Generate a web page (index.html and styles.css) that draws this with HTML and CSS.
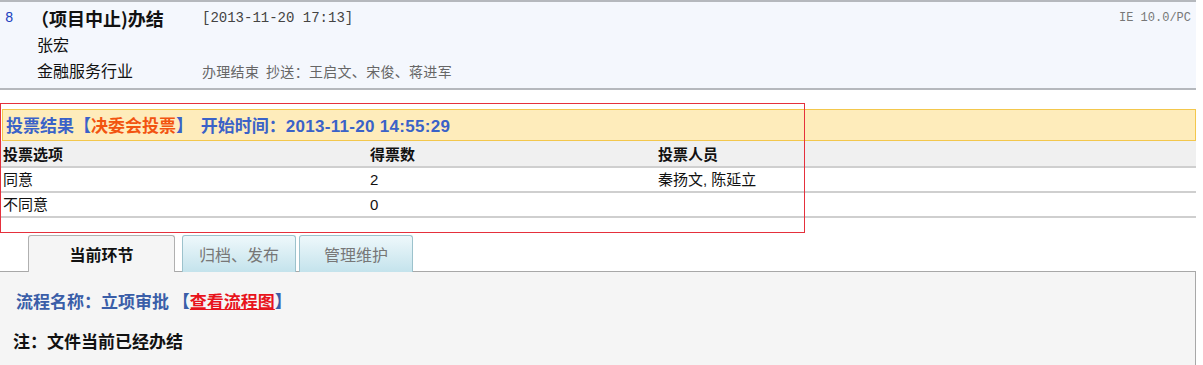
FILE: index.html
```html
<!DOCTYPE html>
<html lang="zh-CN">
<head>
    <meta charset="UTF-8">
    <title>办结详情</title>
    <link rel="stylesheet" href="styles.css">
</head>
<body>

    <!-- Document header -->
    <div class="doc-head">
        <div class="doc-num">8</div>
        <div class="doc-title">
            <div class="title">（项目中止)办结</div>
            <div>张宏</div>
            <div>金融服务行业</div>
        </div>
        <div class="doc-meta">
            <div class="date">[2013-11-20 17:13]</div>
            <div>&nbsp;</div>
            <div class="note">办理结束 &nbsp;抄送：王启文、宋俊、蒋进军</div>
        </div>
        <div class="doc-client">IE 10.0/PC</div>
    </div>

    <!-- Vote result -->
    <div class="vote">
        <div class="vote-bar">
            投票结果<span class="vote-type">【<em>决委会投票</em>】</span>&nbsp;&nbsp;开始时间：<span class="vote-time">2013-11-20 14:55:29</span>
        </div>
        <table class="vote-table">
            <tr>
                <th class="col-opt">投票选项</th>
                <th class="col-num">得票数</th>
                <th>投票人员</th>
            </tr>
            <tr>
                <td>同意</td>
                <td>2</td>
                <td>秦扬文, 陈延立</td>
            </tr>
            <tr>
                <td>不同意</td>
                <td>0</td>
                <td></td>
            </tr>
        </table>
        <div class="mark"></div>
    </div>

    <!-- Tabs -->
    <div class="tabs">
        <a class="tab active" href="#">当前环节</a>
        <a class="tab" href="#">归档、发布</a>
        <a class="tab" href="#">管理维护</a>
    </div>
    <div class="panel">
        <p class="flow">流程名称：立项审批 <span class="bracket">【<a href="#">查看流程图</a>】</span></p>
        <p class="remark">注：文件当前已经办结</p>
    </div>

</body>
</html>
```

FILE: styles.css
```css
/* General */
body {
    margin: 0;
    font-family: "Noto Sans CJK SC", "Noto Sans", sans-serif;
    font-size: 15px;
    color: #111;
    background: #fff;
    width: 1196px;
}

/* Document header */
.doc-head {
    display: flex;
    border-top: 2px solid #b5b8bd;
    border-bottom: 2px solid #b5b8bd;
    background: #f4f7fd;
    padding: 3px 0 3px;
    height: 80px;
    line-height: 26px;
}

.doc-num {
    width: 35px;
    padding-left: 5px;
    box-sizing: border-box;
    font-family: "Liberation Mono", monospace;
    font-size: 14px;
    color: #2040c0;
}

.doc-title {
    width: 167px;
    padding-left: 2px;
    box-sizing: border-box;
    font-size: 16px;
}

.doc-title .title {
    font-weight: bold;
    font-size: 18px;
    margin-left: -6px;
    white-space: nowrap;
}

.doc-meta {
    flex: 1;
    font-size: 14px;
    color: #666;
}

.doc-meta .date {
    font-family: "Liberation Mono", monospace;
    color: #444;
}

.doc-meta .note {
    padding-top: 1px;
    letter-spacing: 0.3px;
}

.doc-client {
    padding-right: 5px;
    font-family: "Liberation Mono", monospace;
    font-size: 12px;
    color: #777;
}

/* Vote result */
.vote {
    position: relative;
    margin-top: 19px;
}

.vote-bar {
    margin-left: 2px;
    height: 30px;
    line-height: 30px;
    padding-left: 3px;
    background: #feecbb;
    border: 1px solid #f3c74c;
    color: #3a62c8;
    font-weight: bold;
    font-size: 17px;
}

.vote-type em {
    font-style: normal;
    color: #f25410;
}

.vote-time {
    font-family: "Liberation Sans", Arial, sans-serif;
    font-size: 17px;
    letter-spacing: 0.3px;
}

.vote-table {
    width: 100%;
    border-collapse: collapse;
    font-size: 15px;
}

.vote-table th,
.vote-table td {
    text-align: left;
    padding: 0 0 0 3px;
    height: 23px;
    line-height: 23px;
    border-bottom: 2px solid #cfcfcf;
}

.vote-table td {
    font-family: "Liberation Sans", "Noto Sans CJK SC", sans-serif;
}

.vote-table th {
    height: 25px;
    background: #f0f0f0;
    font-weight: bold;
}

.vote-table .col-opt {
    width: 364px;
}

.vote-table .col-num {
    width: 285px;
}

/* annotation frame drawn over the vote block */
.mark {
    position: absolute;
    left: 0;
    top: -6px;
    width: 803px;
    height: 128px;
    border: 1px solid #e5303c;
    pointer-events: none;
}

/* Tabs */
.tabs {
    display: flex;
    margin-top: 17px;
    padding-left: 28px;
    height: 36px;
}

.tab {
    display: block;
    box-sizing: border-box;
    height: 37px;
    padding-top: 6px;
    text-align: center;
    font-size: 16px;
    color: #777;
    text-decoration: none;
    border: 1px solid #9cc2cc;
    border-bottom: none;
    border-radius: 3px 3px 0 0;
    background: linear-gradient(#eef8fb, #c4e3ec);
    width: 114px;
    margin-right: 3px;
}

.tab.active {
    width: 147px;
    margin-right: 7px;
    color: #111;
    font-weight: bold;
    border-color: #b0b0b0;
    background: #f5f5f5;
    position: relative;
    z-index: 1;
}

.panel {
    border-top: 1px solid #a8a8a8;
    border-right: 1px solid #a8a8a8;
    background: #f5f5f5;
    height: 95px;
    padding: 10px 0 0 0;
}

.flow {
    margin: 6px 0 0 16px;
    font-size: 17px;
    font-weight: bold;
    color: #3a5ea8;
}

.flow a {
    color: #e8141c;
    text-decoration: underline;
}

.remark {
    margin: 15px 0 0 13px;
    font-size: 17px;
    font-weight: bold;
    color: #111;
}
```
